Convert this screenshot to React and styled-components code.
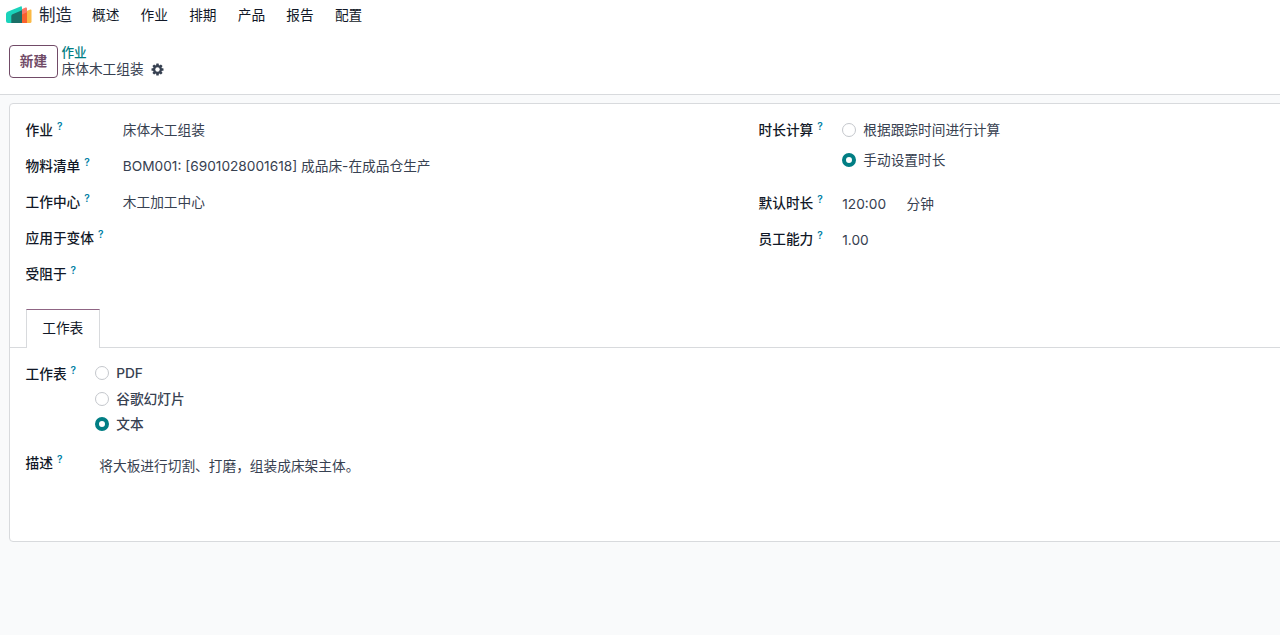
import React from "react";
import styled, { createGlobalStyle } from "styled-components";

const GlobalStyle = createGlobalStyle`
  * { box-sizing: border-box; }
  html, body { margin: 0; height: 100%; overflow: hidden; }
  body {
    background: #f9fafb;
    color: #374151;
    font-family: Inter, "Noto Sans CJK SC", sans-serif;
    font-size: 13.7px;
    line-height: 20px;
  }
`;

const Page = styled.div`
  width: 1280px;
  height: 635px;
  overflow: hidden;
`;

const Navbar = styled.nav`
  display: flex;
  align-items: center;
  height: 30px;
  padding-left: 6px;
  background: #fff;
  color: #1f2937;
`;

const Brand = styled.span`
  margin: 0 20px 0 7px;
  width: 33px;
  font-size: 16.5px;
  white-space: nowrap;
`;

const Menu = styled.div`
  display: flex;
  gap: 21.2px;
  padding-bottom: 1px;
`;

const MenuItem = styled.a`
  color: #111827;
  white-space: nowrap;
`;

const ControlPanel = styled.header`
  display: flex;
  align-items: flex-start;
  gap: 3.5px;
  height: 65px;
  padding: 15px 0 0 9px;
  background: #fff;
  border-bottom: 1px solid #d8dadd;
`;

const NewButton = styled.button`
  width: 49px;
  height: 33px;
  padding: 0 0 1px;
  border: 1px solid #714b67;
  border-radius: 4px;
  background: #fff;
  color: #714b67;
  font: inherit;
  font-weight: 600;
`;

const Breadcrumb = styled.div`
  display: flex;
  flex-direction: column;
  margin-top: -1px;
`;

const ParentLink = styled.a`
  color: #017e84;
  font-size: 12.6px;
  font-weight: 500;
  line-height: 17px;
`;

const Current = styled.div`
  display: flex;
  align-items: center;
  gap: 7.5px;
  line-height: 17px;
`;

const Sheet = styled.main`
  width: 1290px;
  height: 439px;
  margin: 8px 0 0 9px;
  padding-top: 8px;
  background: #fff;
  border: 1px solid #d8dadd;
  border-radius: 4px;
`;

const Columns = styled.div`
  display: grid;
  grid-template-columns: 733px 1fr;
  height: 197px;
  padding-left: 15.5px;
`;

const Group = styled.div`
  display: flex;
  flex-direction: column;
`;

const Field = styled.div`
  display: grid;
  grid-template-columns: ${(p) => p.$label}px 1fr;
  height: ${(p) => p.$height || 36.15}px;
`;

const Label = styled.label`
  display: flex;
  height: 35px;
  align-items: center;
  color: #111827;
  font-weight: 500;
  white-space: nowrap;
`;

const Help = styled.sup`
  margin: -8px 0 0 4px;
  color: #0180a5;
  font-size: 10.2px;
  font-weight: 600;
  line-height: 10px;
`;

const Value = styled.div`
  display: flex;
  gap: 20.5px;
  height: 35px;
  padding-top: ${(p) => p.$top || 1}px;
  align-items: center;
  white-space: nowrap;
`;

const Options = styled.div`
  display: flex;
  flex-direction: column;
  padding-top: ${(p) => p.$top}px;
`;

const Option = styled.label`
  display: flex;
  align-items: center;
  gap: 7px;
  height: ${(p) => p.$height}px;
  font-weight: ${(p) => p.$weight || 400};
  white-space: nowrap;
`;

const Dot = styled.span`
  width: 14px;
  height: 14px;
  border: ${(p) => (p.$on ? "4px solid #017e84" : "1px solid #c4c7cc")};
  border-radius: 50%;
  background: #fff;
`;

const Tabs = styled.div`
  display: flex;
  height: 39px;
  padding-left: 15.5px;
  border-bottom: 1px solid #d8dadd;
`;

const Tab = styled.div`
  width: 74.5px;
  height: 39px;
  padding-top: 8px;
  border: 1px solid #d8dadd;
  border-top-color: #8f6584;
  border-bottom: 0;
  background: #fff;
  color: #111827;
  text-align: center;
`;

const TabPane = styled.div`
  padding: 8px 0 0 15.5px;
`;

function Logo() {
  return (
    <svg width="26" height="18" viewBox="0 0 26 18">
      <path d="M18 6.1 24.3 3.6Q25.5 3.2 25.5 4.5V15.5Q25.5 17 24 17H18Z" fill="#fbb945" />
      <path d="M11 5.5 19.5 1.6Q21 1 21 2.6V17H11Z" fill="#fc7868" />
      <path d="M16 8.6 21 6.3V17H16Z" fill="#f9612e" />
      <path d="M0 8Q0 6.4 1.5 5.7L14.5.4Q16 0 16 1.5V17H2Q0 17 0 15Z" fill="#1ad3bb" />
      <path d="M5.3 10Q5.3 8.8 6.5 8.2L16 4.2V17H5.3Z" fill="#1b6f66" />
    </svg>
  );
}

function Gear() {
  return (
    <svg width="13" height="13" viewBox="-6.5 -6.5 13 13" fill="#374151">
      {[0, 45, 90, 135].map((angle) => (
        <rect key={angle} x="-1.3" y="-6" width="2.6" height="12" rx=".5" transform={`rotate(${angle})`} />
      ))}
      <circle r="4.5" />
      <circle r="2.2" fill="#fff" />
    </svg>
  );
}

function FieldLabel({ children }) {
  return (
    <Label>
      {children}
      <Help>?</Help>
    </Label>
  );
}

function Radio({ on, height, weight, children }) {
  return (
    <Option $height={height} $weight={weight}>
      <Dot $on={on} />
      {children}
    </Option>
  );
}

const menu = ["概述", "作业", "排期", "产品", "报告", "配置"];
const fields = [
  ["作业", "床体木工组装"],
  ["物料清单", "BOM001: [6901028001618] 成品床-在成品仓生产"],
  ["工作中心", "木工加工中心"],
  ["应用于变体", ""],
  ["受阻于", ""],
];

export default function App() {
  return (
    <Page>
      <GlobalStyle />
      <Navbar>
        <Logo />
        <Brand>制造</Brand>
        <Menu>
          {menu.map((item) => (
            <MenuItem key={item}>{item}</MenuItem>
          ))}
        </Menu>
      </Navbar>
      <ControlPanel>
        <NewButton>新建</NewButton>
        <Breadcrumb>
          <ParentLink>作业</ParentLink>
          <Current>
            床体木工组装
            <Gear />
          </Current>
        </Breadcrumb>
      </ControlPanel>
      <Sheet>
        <Columns>
          <Group>
            {fields.map(([label, value]) => (
              <Field key={label} $label={97.3}>
                <FieldLabel>{label}</FieldLabel>
                <Value>{value}</Value>
              </Field>
            ))}
          </Group>
          <Group>
            <Field $label={83.8} $height={73}>
              <FieldLabel>时长计算</FieldLabel>
              <Options $top={2.5}>
                <Radio height={30}>根据跟踪时间进行计算</Radio>
                <Radio height={30} on>手动设置时长</Radio>
              </Options>
            </Field>
            <Field $label={83.8}>
              <FieldLabel>默认时长</FieldLabel>
              <Value $top={2}>
                <span>120:00</span>
                <span>分钟</span>
              </Value>
            </Field>
            <Field $label={83.8}>
              <FieldLabel>员工能力</FieldLabel>
              <Value $top={2}>1.00</Value>
            </Field>
          </Group>
        </Columns>
        <Tabs>
          <Tab>工作表</Tab>
        </Tabs>
        <TabPane>
          <Field $label={69.7} $height={89}>
            <FieldLabel>工作表</FieldLabel>
            <Options $top={4.5}>
              <Radio height={25.4} weight={500}>PDF</Radio>
              <Radio height={25.4} weight={500}>谷歌幻灯片</Radio>
              <Radio height={25.4} weight={500} on>文本</Radio>
            </Options>
          </Field>
          <Field $label={73.8}>
            <FieldLabel>描述</FieldLabel>
            <Value $top={7}>将大板进行切割、打磨，组装成床架主体。</Value>
          </Field>
        </TabPane>
      </Sheet>
    </Page>
  );
}
